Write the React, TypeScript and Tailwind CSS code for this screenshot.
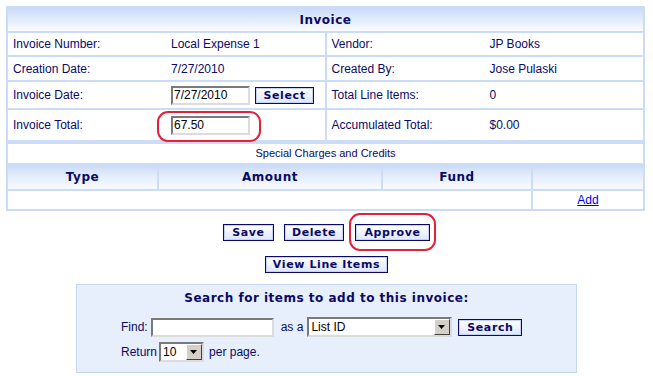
import React from 'react';

const sans = "font-['Liberation_Sans',Arial,sans-serif]";
const bold = "font-['DejaVu_Sans',Verdana,sans-serif] font-bold";

function Btn({ label, w }: { label: string; w: string }) {
  return (
    <button
      type="button"
      className={`${bold} ${w} h-[17px] shrink-0 border border-[#0a0a66] bg-gradient-to-b from-[#ffffff] to-[#dde6fb] shadow-[inset_0_0_0_1px_#c4d2f2] text-[11px] leading-none tracking-[0.6px] text-[#0a0a66] flex items-center justify-center`}
    >
      {label}
    </button>
  );
}

function TextBox({ value, w }: { value?: string; w: string }) {
  return (
    <div
      className={`${sans} ${w} h-[19px] shrink-0 bg-white border-2 border-t-[#7a7a7a] border-l-[#7a7a7a] border-b-[#dcdcdc] border-r-[#dcdcdc] text-[12px] leading-[15px] text-black pl-[1px]`}
    >
      {value}
    </div>
  );
}

function Combo({ value, w }: { value: string; w: string }) {
  return (
    <div
      className={`${sans} ${w} h-[20px] shrink-0 bg-white border-2 border-t-[#7a7a7a] border-l-[#7a7a7a] border-b-[#dcdcdc] border-r-[#dcdcdc] flex items-center`}
    >
      <span className="flex-1 text-[12px] leading-none text-black pl-[2px]">{value}</span>
      <span className="w-[16px] h-[16px] bg-[#d4d0c8] border border-t-white border-l-white border-b-[#404040] border-r-[#404040] flex items-center justify-center">
        <svg width="8" height="4" viewBox="0 0 8 4">
          <path d="M0 0h7L3.5 4z" fill="#000" />
        </svg>
      </span>
    </div>
  );
}

const Ring = ({ className }: { className: string }) => (
  <span className={`absolute border-2 border-[#e5203c] rounded-[11px] pointer-events-none ${className}`} />
);

function Cell({ label, children }: { label: string; children: React.ReactNode }) {
  return (
    <div className={`${sans} bg-white flex items-center pl-[5px] text-[12px] text-[#0a0a66]`}>
      <span className="w-[158px] shrink-0">{label}</span>
      <div className="flex items-center gap-[5px]">{children}</div>
    </div>
  );
}

export default function App() {
  return (
    <div className="w-[653px] h-[376px] bg-white overflow-hidden pt-[6px]">
      {/* Invoice table */}
      <div className="ml-[6px] w-[639px] bg-[#cadcf7] p-[2px] flex flex-col">
        <div className={`${bold} h-[23px] bg-gradient-to-b from-[#c9daf6] via-[#e3ecfb] to-[#f9fbff] flex items-center justify-center text-[12px] text-[#0a0a66] tracking-[0.5px]`}>
          Invoice
        </div>

        <div className="mt-[2px] grid grid-cols-2 grid-rows-[22px_23px_26px_30px] gap-[2px]">
          <Cell label="Invoice Number:">Local Expense 1</Cell>
          <Cell label="Vendor:">JP Books</Cell>
          <Cell label="Creation Date:">7/27/2010</Cell>
          <Cell label="Created By:">Jose Pulaski</Cell>
          <Cell label="Invoice Date:">
            <TextBox value="7/27/2010" w="w-[79px]" />
            <Btn label="Select" w="w-[59px]" />
          </Cell>
          <Cell label="Total Line Items:">0</Cell>
          <Cell label="Invoice Total:">
            <div className="relative">
              <TextBox value="67.50" w="w-[79px]" />
              <Ring className="-left-[14px] -right-[11px] -top-[5px] -bottom-[7px]" />
            </div>
          </Cell>
          <Cell label="Accumulated Total:">$0.00</Cell>
        </div>

        <div className={`${sans} mt-[4px] h-[19px] bg-white flex items-center justify-center text-[11px] text-[#0a0a66]`}>
          Special Charges and Credits
        </div>

        <div className="mt-[2px] grid grid-cols-[149px_222px_148px_1fr] gap-[2px]">
          {['Type', 'Amount', 'Fund', ''].map((h, i) => (
            <div
              key={i}
              className={`${bold} h-[24px] bg-gradient-to-b from-[#c9daf6] via-[#e6eefc] to-[#f9fbff] flex items-center justify-center text-[12px] text-[#0a0a66] tracking-[0.5px]`}
            >
              {h}
            </div>
          ))}
        </div>

        <div className="mt-[2px] grid grid-cols-[523px_1fr] gap-[2px]">
          <div className="h-[18px] bg-white" />
          <div className={`${sans} h-[18px] bg-white flex items-center justify-center text-[12px]`}>
            <a href="#" className="text-[#0000ff] underline">Add</a>
          </div>
        </div>
      </div>

      {/* Actions */}
      <div className="mt-[13px] flex justify-center items-center gap-[10px]">
        <Btn label="Save" w="w-[51px]" />
        <Btn label="Delete" w="w-[60px]" />
        <div className="relative ml-[1px]">
          <Btn label="Approve" w="w-[75px]" />
          <Ring className="-left-[6px] -right-[6px] -top-[11px] -bottom-[10px]" />
        </div>
      </div>
      <div className="mt-[15px] flex justify-center">
        <Btn label="View Line Items" w="w-[123px]" />
      </div>

      {/* Search panel */}
      <div className={`${sans} mt-[11px] mx-auto w-[501px] h-[89px] border border-[#c6d7f3] bg-[#e7eefc] pt-[6px] text-[12px] text-[#0a0a66]`}>
        <div className={`${bold} text-center text-[12px] leading-[14px] tracking-[0.5px]`}>
          Search for items to add to this invoice:
        </div>
        <div className="mt-[12px] pl-[44px] h-[20px] flex items-center">
          <span className="mr-[3px]">Find:</span>
          <TextBox w="w-[123px]" />
          <span className="ml-[7px] mr-[4px]">as a</span>
          <Combo value="List ID" w="w-[145px]" />
          <span className="ml-[6px]">
            <Btn label="Search" w="w-[64px]" />
          </span>
        </div>
        <div className="mt-[5px] pl-[44px] h-[20px] flex items-center">
          <span className="mr-[2px]">Return</span>
          <Combo value="10" w="w-[45px]" />
          <span className="ml-[5px]">per page.</span>
        </div>
      </div>
    </div>
  );
}
